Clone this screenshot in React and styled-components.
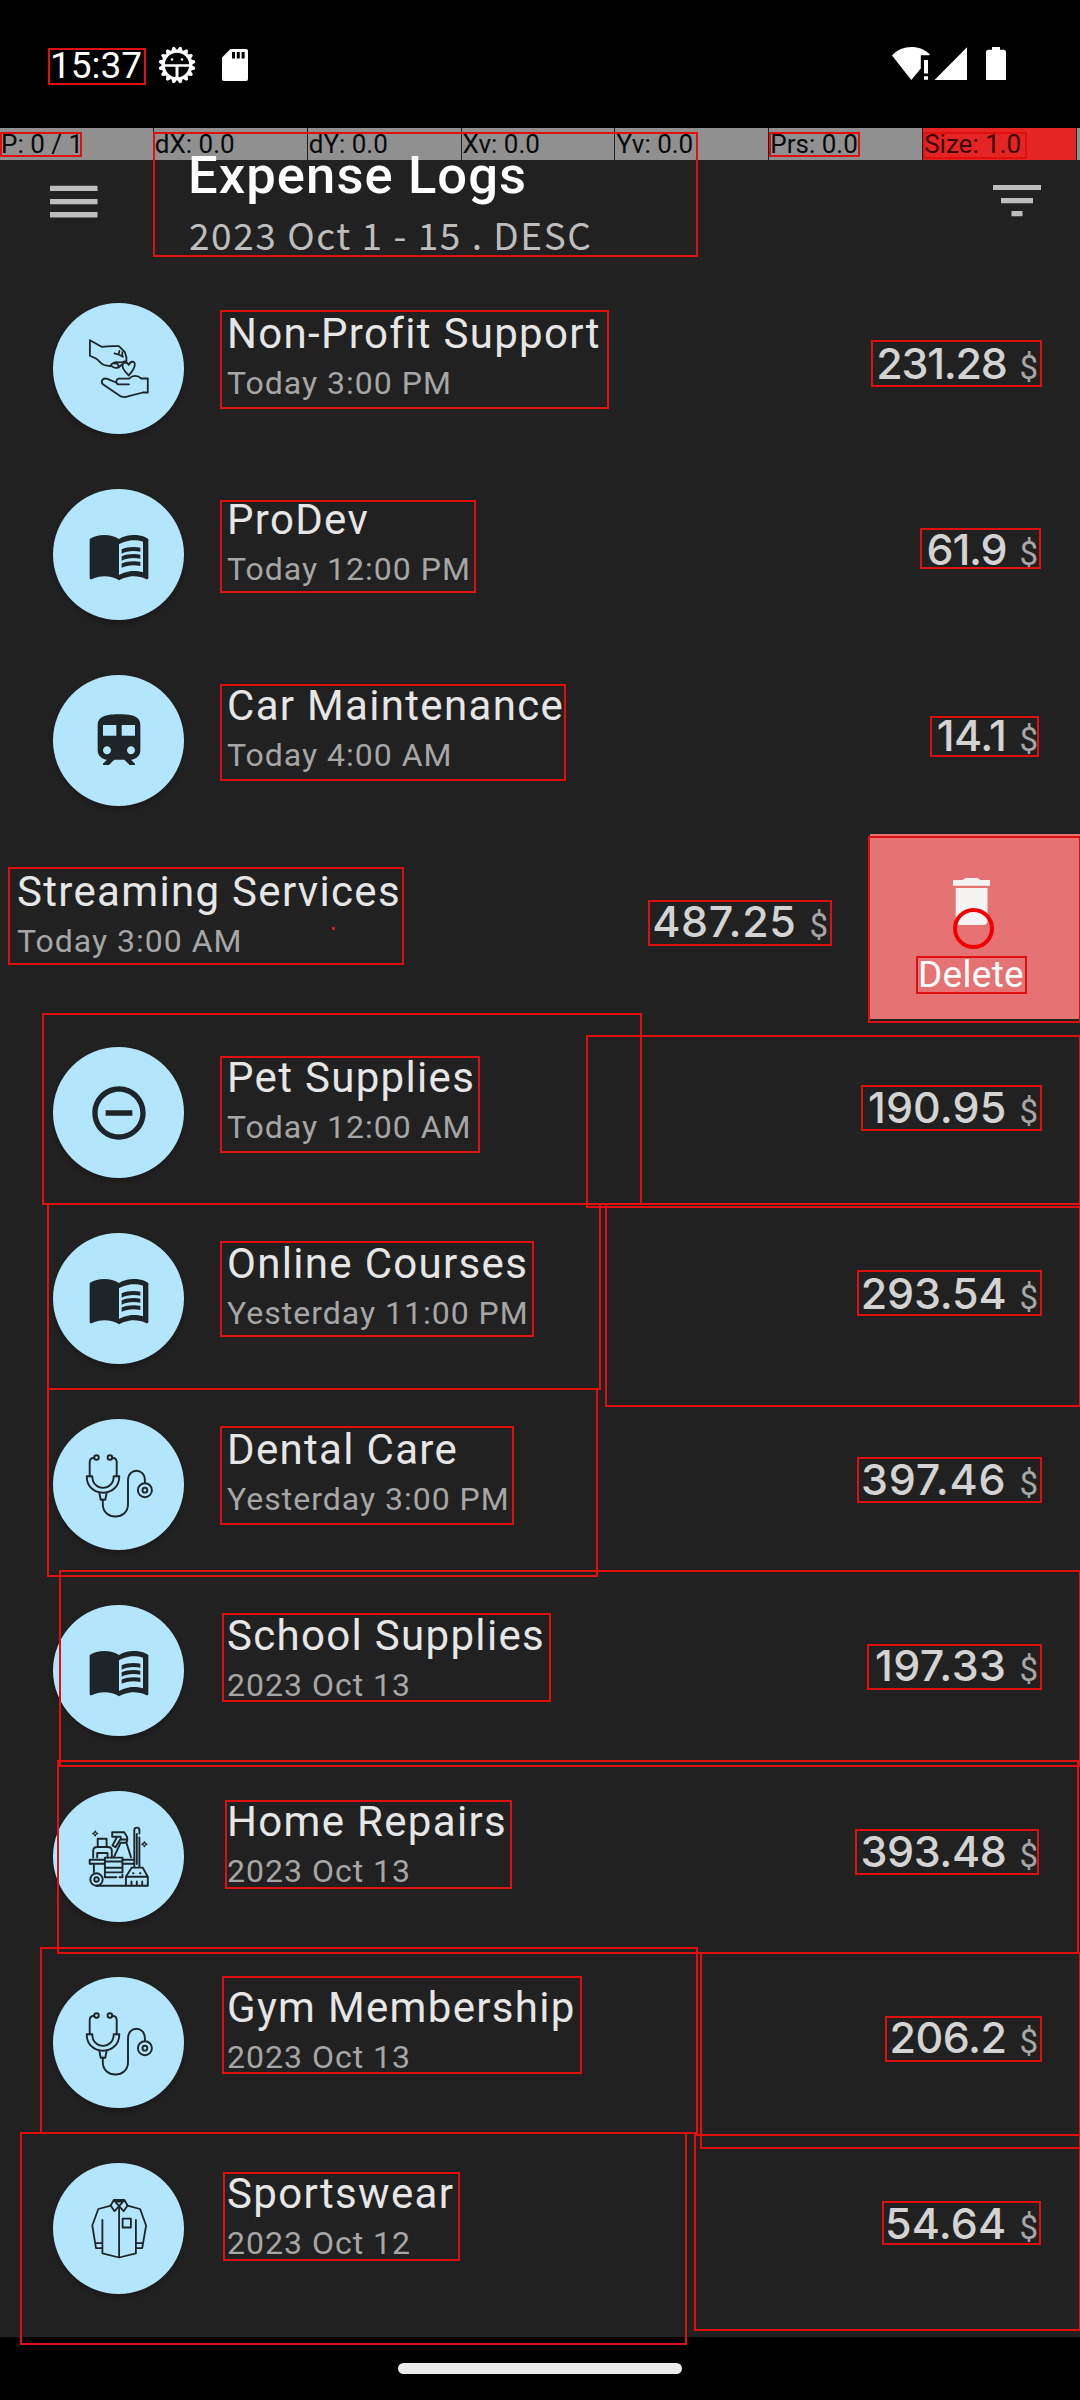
import React from "react";
import styled, { createGlobalStyle } from "styled-components";
import { MdMenuBook, MdTrain, MdRemoveCircleOutline } from "react-icons/md";

const GlobalStyle = createGlobalStyle`
  *, *::before, *::after { box-sizing: border-box; }
  body { margin: 0; background: #000; font-family: Roboto, "Liberation Sans", sans-serif; }
`;

const Screen = styled.div`
  position: relative;
  display: flex;
  flex-direction: column;
  width: 1080px;
  height: 2400px;
  background: #212121;
  overflow: hidden;
`;

const StatusBar = styled.header`
  display: flex;
  justify-content: space-between;
  height: 128px;
  flex: none;
  padding: 46px 73px 0 50px;
  background: #000;
  color: #fff;
`;

const StatusGroup = styled.div`
  display: flex;
  align-items: flex-start;
`;

const Clock = styled.span`
  width: 108px;
  font-size: 37px;
  line-height: 40px;
`;

const PointerBar = styled.div`
  display: flex;
  gap: 1px;
  flex: none;
  height: 32px;
  background: #212121;
`;

const PointerCell = styled.div`
  width: ${(p) => p.$width || 153}px;
  padding-left: 1px;
  background: ${(p) => (p.$alert ? "#e52424" : "#909090")};
  color: ${(p) => (p.$alert ? "#3a0808" : "#0a0a0a")};
  font-size: 26px;
  line-height: 33px;
  white-space: nowrap;
`;

const AppBar = styled.div`
  position: relative;
  z-index: 1;
  display: flex;
  flex: none;
  height: 116px;
  padding: 0 39px 0 50px;
`;

const BarIcon = styled.svg`
  flex: none;
  width: 48px;
  height: 34px;
  margin-top: 25px;
  fill: #bdbdbd;
`;

const Heading = styled.div`
  flex: 1;
  margin: -16px 0 0 90px;
`;

const HeadingTitle = styled.h1`
  margin: 0;
  color: #fff;
  font-size: 52.5px;
  font-weight: 500;
  line-height: 62px;
  letter-spacing: 1.1px;
`;

const HeadingRange = styled.p`
  margin: 0;
  padding-left: 1px;
  color: #bdbdbd;
  font-family: "Noto Sans CJK SC", "Noto Sans", sans-serif;
  font-size: 37px;
  line-height: 56px;
  letter-spacing: 1.55px;
`;

const List = styled.main`
  flex: none;
  height: 2061px;
  overflow: hidden;
`;

const Row = styled.div`
  display: flex;
  height: 186px;
  margin-left: ${(p) => (p.$open ? -210 : 0)}px;
`;

const RowBody = styled.div`
  display: flex;
  flex: none;
  width: 1080px;
  padding: 27px 42px 0 53px;
`;

const Badge = styled.div`
  display: flex;
  align-items: center;
  justify-content: center;
  flex: none;
  width: 131px;
  height: 131px;
  border-radius: 50%;
  background: #b3e5fc;
  color: #1d2529;
  box-shadow: 0 3px 5px rgba(0, 0, 0, 0.25);
`;

const LineIcon = styled.svg`
  width: 64px;
  height: 64px;
  overflow: visible;
  fill: none;
  stroke: currentColor;
  stroke-width: ${(p) => p.$weight || 1.8};
  stroke-linejoin: round;
  stroke-linecap: round;
`;

const Labels = styled.div`
  flex: 1;
  padding: 6px 0 0 43px;
`;

const Name = styled.div`
  color: #e6e6e6;
  font-size: 42px;
  line-height: 50px;
  letter-spacing: 1.32px;
  white-space: nowrap;
`;

const When = styled.div`
  margin-top: 4px;
  color: #a6a6a6;
  font-size: 32px;
  line-height: 40px;
  letter-spacing: 1px;
`;

const Amount = styled.div`
  display: flex;
  align-items: baseline;
  height: 56px;
  margin-top: 32px;
  color: #d3d3d3;
  font-family: Inter, Roboto, sans-serif;
  font-size: 43px;
  font-weight: 500;
  line-height: 56px;
  letter-spacing: ${(p) => p.$track || 0}px;
`;

const Currency = styled.span`
  margin-left: 13px;
  color: #a6a6a6;
  font-family: Roboto, sans-serif;
  font-size: 33px;
  font-weight: 400;
  letter-spacing: 0;
`;

const DeleteAction = styled.button`
  display: flex;
  flex-direction: column;
  align-items: center;
  flex: none;
  width: 210px;
  height: 185px;
  padding: 44px 8px 0 0;
  border: 0;
  background: #e57373;
  color: #fff;
  font-family: Roboto, sans-serif;
  font-size: 37px;
  line-height: 44px;
  letter-spacing: 0.3px;
`;

const TrashIcon = styled.svg`
  width: 37px;
  height: 47px;
  margin: 0 0 28px 0;
  fill: #f6f3f3;
`;

const NavBar = styled.footer`
  display: flex;
  justify-content: center;
  flex: none;
  height: 63px;
  padding-top: 26px;
  background: #000;
`;

const NavPill = styled.div`
  width: 284px;
  height: 11px;
  border-radius: 6px;
  background: #ebebeb;
`;

const Overlay = styled.div`
  position: absolute;
  inset: 0;
  z-index: 2;
  pointer-events: none;
`;

const Bounds = styled.div`
  position: absolute;
  left: ${(p) => p.$b[0]}px;
  top: ${(p) => p.$b[1]}px;
  width: ${(p) => p.$b[2] - p.$b[0]}px;
  height: ${(p) => p.$b[3] - p.$b[1]}px;
  border: 2px solid #df1010;
`;

const Touch = styled.div`
  position: absolute;
  left: 953px;
  top: 908px;
  width: 41px;
  height: 41px;
  border: 4px solid #f00000;
  border-radius: 50%;
`;

const Trail = styled.div`
  position: absolute;
  left: 332px;
  top: 927px;
  width: 3px;
  height: 3px;
  background: #c02020;
`;

const GiveIcon = () => (
  <LineIcon viewBox="0 0 64 64">
    <path d="M2.9 3.2v15.6l6.5 3c2 1 3.500 4 7 6 2.500 1.200 5 .5 7 1.500M2.9 3.200l11.800 6.600c6-.8 12-.9 17.200-.6l6 6 1.500 5v5.500" />
    <path d="M27.500 16.400c3 .6 5.500 1.400 8.500 3.400M32.500 13.800l-1 3.500M35.500 15.200l-.5 3.500M23.500 29c1-3 4-3.500 6-3.800 3 .3 6 .5 8.500-1M24.500 28.800c1.500 2 4 2.500 7 1.500M27.500 26.500c2-.4 4.500.4 4 3.800M31.500 30.500l3.500-3" />
    <path d="M41.700 38.500c-3-3.500-6.200-6-6.200-9.800 0-3.600 4.500-4.600 6.200-.8 1.700-3.800 6.100-4.400 6.100-.5 0 3.800-3.100 7.600-6.100 11.100z" />
    <path d="M42 47.300H31.200c-2.600-.8-2.600-4.800.4-5.700h10.500c3.500-3.600 8.500-3.600 12.200-.1h6.500v14h-5L38 60.200l-4.500-.9-18-12.300c-2.300-3.800 1-6.300 4.900-5.200l8.600 3.700" />
  </LineIcon>
);

const StethoscopeIcon = () => (
  <LineIcon viewBox="0 0 64 64" $weight={1.9}>
    <circle cx="9.500" cy="4.500" r="2.300" />
    <circle cx="22.900" cy="4.500" r="2.300" />
    <path d="M7 4.700C4.500 5 2.700 6.500 2.700 9v14.200M25.400 4.700c2.500.3 4.300 1.800 4.300 4.300v14.200" />
    <path d="M-.3 23.200h5.600c0 15.500 21.400 15.500 21.400 0h5.600c0 22-32.600 22-32.600 0z" />
    <path d="M12.300 39.500l1.400 7.200h4.600l1.400-7.200" />
    <path d="M15.800 46.700v4.500c0 16.400 25.200 16.400 25.200 0V27.500c0-13 16.900-13 16.900 0v2.500" />
    <circle cx="57.900" cy="37.200" r="7" />
    <circle cx="57.900" cy="37.200" r="2.400" />
  </LineIcon>
);

const CleaningIcon = () => (
  <LineIcon viewBox="0 0 64 64" $weight={1.9}>
    <path d="M10.700 22v-8.200h8.900V22M6.200 32.500v-6.700c0-2.600 1.500-3.800 4-3.800h10.600c2.500 0 4 1.200 4 3.800v6.700M10.200 32.500v-4.500h10.300v4.500" />
    <path d="M25.200 11.700V7.200h12l2.800 4.500c.6 2.500.4 4.500-.8 6h-5.500l-6.800 14.500M25.200 11.700h8.500M30 12l-4.500 8.500 3 1.700 5.500-9M34.500 14.500h5M39.500 18l4.500 14.200" />
    <path d="M47.300 42V5c0-3.200 5.100-3.200 5.100 0v3.500M52.400 12.500V42M49.800 9v30" />
    <path d="M17.900 34.800H2.700v4h15.200M35.500 34.800h11.800M35.500 38.800h11.800" />
    <path d="M17.900 32.600h17.600v14.800M17.900 32.600v19.600h11.500M17.900 36.500h17.600M17.900 42.800h17.600M17.900 47.400h17.600M32.500 52.200h3v-2.500M6.900 39v8" />
    <circle cx="9.500" cy="54.500" r="6.200" />
    <circle cx="9.500" cy="54.500" r="2.200" />
    <path d="M9.500 60.700h51.300v-8.900H38.900v8.900M38.900 51.800l5.900-9.200h10.900l5.100 9.200M46 48.300h.5M53 48.300h.5M44.500 60.500v-4M49.800 60.500v-4M55.200 60.500v-4" />
    <path d="M8.200 6l.9 1.700 1.700.8-1.700.8-.9 1.700-.9-1.700-1.700-.8 1.700-.8zM57.400 16.700l.9 1.700 1.700.8-1.700.8-.9 1.700-.9-1.700-1.700-.8 1.700-.8z" strokeWidth="1.200" />
  </LineIcon>
);

const ShirtIcon = () => (
  <LineIcon viewBox="0 0 64 64">
    <path d="M23.900 8.700l-12.600 3.300-6 16.500L9 51.200h6.200M40.400 8.700l12.700 3.300 6 16.500-3.900 22.700h-6.300M8.200 46.200h6.800M49.200 46.200h6.700" />
    <path d="M15.400 22.800v33.600L32.100 60.500l16.800-4.100V22.800M32.100 9.200v51.300" />
    <path d="M26.800 3h10.600l3.200 5.500-4 5.700-4.500-5-4.600 5-3.800-5.700zM26.800 3l5.300 6.200L37.400 3M28.800 4.600h6.500" />
    <path d="M35.600 21.700h8.300v8.800h-8.300z" />
  </LineIcon>
);

const BookIcon = () => <MdMenuBook size={64} />;
const TrainIcon = () => <MdTrain size={64} />;
const MinusIcon = () => <MdRemoveCircleOutline size={64} />;

const expenses = [
  { name: "Non-Profit Support", when: "Today 3:00 PM", amount: "231.28", track: -1.3, Icon: GiveIcon },
  { name: "ProDev", when: "Today 12:00 PM", amount: "61.9", track: -1.2, Icon: BookIcon },
  { name: "Car Maintenance", when: "Today 4:00 AM", amount: "14.1", track: -0.5, Icon: TrainIcon },
  { name: "Streaming Services", when: "Today 3:00 AM", amount: "487.25", track: 0.6, Icon: MinusIcon, open: true },
  { name: "Pet Supplies", when: "Today 12:00 AM", amount: "190.95", track: 0.1, Icon: MinusIcon },
  { name: "Online Courses", when: "Yesterday 11:00 PM", amount: "293.54", track: -0.2, Icon: BookIcon },
  { name: "Dental Care", when: "Yesterday 3:00 PM", amount: "397.46", track: 0.8, Icon: StethoscopeIcon },
  { name: "School Supplies", when: "2023 Oct 13", amount: "197.33", track: 0.4, Icon: BookIcon },
  { name: "Home Repairs", when: "2023 Oct 13", amount: "393.48", track: -0.4, Icon: CleaningIcon },
  { name: "Gym Membership", when: "2023 Oct 13", amount: "206.2", track: -0.5, Icon: StethoscopeIcon },
  { name: "Sportswear", when: "2023 Oct 12", amount: "54.64", track: 0.2, Icon: ShirtIcon },
];

const bounds = [
  [48, 48, 146, 85],
  [0, 132, 82, 157],
  [153, 132, 698, 257],
  [769, 132, 860, 157],
  [923, 132, 1027, 159],
  [220, 310, 609, 409],
  [220, 500, 476, 593],
  [220, 684, 566, 781],
  [8, 867, 404, 965],
  [871, 340, 1042, 387],
  [920, 528, 1041, 569],
  [930, 716, 1039, 757],
  [648, 900, 832, 946],
  [868, 836, 1081, 1023],
  [916, 956, 1027, 994],
  [42, 1013, 642, 1205],
  [586, 1035, 1081, 1208],
  [220, 1056, 480, 1153],
  [861, 1085, 1042, 1131],
  [47, 1203, 601, 1390],
  [605, 1203, 1081, 1407],
  [220, 1241, 534, 1337],
  [857, 1270, 1042, 1316],
  [47, 1388, 598, 1577],
  [220, 1426, 514, 1525],
  [857, 1457, 1042, 1503],
  [59, 1570, 1081, 1767],
  [222, 1613, 551, 1702],
  [867, 1644, 1042, 1690],
  [57, 1760, 1079, 1954],
  [225, 1800, 512, 1889],
  [855, 1829, 1039, 1875],
  [40, 1947, 698, 2134],
  [222, 1976, 582, 2074],
  [700, 1952, 1081, 2149],
  [885, 2016, 1042, 2062],
  [20, 2132, 687, 2345],
  [223, 2172, 460, 2261],
  [694, 2134, 1081, 2331],
  [882, 2201, 1041, 2245],
];

const teeth = Array.from({ length: 16 }, (_, i) => i * 22.5);

export default function App() {
  return (
    <Screen>
      <GlobalStyle />
      <StatusBar>
        <StatusGroup>
          <Clock>15:37</Clock>
          <svg width="38" height="38" viewBox="-19 -19 38 38">
            <circle r="13.700" fill="none" stroke="#fff" strokeWidth="3" />
            {teeth.map((a) => (
              <path key={a} d="M-3-14.500L-1-18.400h2L3-14.500z" fill="#fff" transform={`rotate(${a + 11.25})`} />
            ))}
            <path d="M-13-.8h26v2.600h-26zM-1.500 0h3v14h-3z" fill="#fff" />
            <circle cx="-5" cy="-5.500" r="1.200" fill="#fff" />
            <circle cx="5" cy="-5.500" r="1.200" fill="#fff" />
          </svg>
          <svg width="52" height="38" viewBox="0 0 52 38">
            <path d="M34.500 3H50a2 2 0 0 1 2 2v28a2 2 0 0 1-2 2H28a2 2 0 0 1-2-2V11.500z" fill="#fff" />
            <path d="M36 6h3v6.500h-3zM40.800 6h3v6.500h-3zM45.600 6h3v6.500h-3z" fill="#000" />
          </svg>
        </StatusGroup>
        <StatusGroup>
          <svg width="115" height="36" viewBox="892 46 115 36" fill="#fff">
            <path d="M892 55.500C902 44.500 920 44.500 930 54.500L929 55.300H920.800V68.500L911.300 80z" />
            <path d="M924 60h4v13.500h-4zM924 76.300h4v3.500h-4z" />
            <path d="M967 47.300V80h-32.500z" />
            <path d="M992 47h8v2.700h4.200l1.800 1.600V80h-20V51.300l1.800-1.600h4.200z" />
          </svg>
        </StatusGroup>
      </StatusBar>

      <PointerBar>
        <PointerCell>P: 0 / 1</PointerCell>
        <PointerCell>dX: 0.0</PointerCell>
        <PointerCell>dY: 0.0</PointerCell>
        <PointerCell>Xv: 0.0</PointerCell>
        <PointerCell>Yv: 0.0</PointerCell>
        <PointerCell>Prs: 0.0</PointerCell>
        <PointerCell $alert>Size: 1.0</PointerCell>
        <PointerCell $width={3} />
      </PointerBar>

      <AppBar>
        <BarIcon viewBox="0 0 48 34">
          <path d="M0 .7h47.500V6H0zM0 14h47.500v5.200H0zM0 27h47.500v5.400H0z" />
        </BarIcon>
        <Heading>
          <HeadingTitle>Expense Logs</HeadingTitle>
          <HeadingRange>2023 Oct 1 - 15 . DESC</HeadingRange>
        </Heading>
        <BarIcon viewBox="0 0 48 34">
          <path d="M0-.3h48V5H0zM8 13h32v5.200H8zM18.500 26h11v5.200h-11z" />
        </BarIcon>
      </AppBar>

      <List>
        {expenses.map(({ name, when, amount, track, Icon, open }) => (
          <Row key={name} $open={open}>
            <RowBody>
              <Badge>
                <Icon />
              </Badge>
              <Labels>
                <Name>{name}</Name>
                <When>{when}</When>
              </Labels>
              <Amount $track={track}>
                {amount}
                <Currency>$</Currency>
              </Amount>
            </RowBody>
            {open && (
              <DeleteAction>
                <TrashIcon viewBox="0 0 37 47">
                  <path d="M0 2h9.500l3-2h12l3 2H37v5.800H0zM2.700 10h31.800v32.500c0 3-1.800 4.500-4.500 4.500H7.200c-2.700 0-4.500-1.500-4.500-4.500z" />
                </TrashIcon>
                Delete
              </DeleteAction>
            )}
          </Row>
        ))}
      </List>

      <NavBar>
        <NavPill />
      </NavBar>

      <Overlay>
        {bounds.map((b) => (
          <Bounds key={b.join("-")} $b={b} />
        ))}
        <Trail />
        <Touch />
      </Overlay>
    </Screen>
  );
}
